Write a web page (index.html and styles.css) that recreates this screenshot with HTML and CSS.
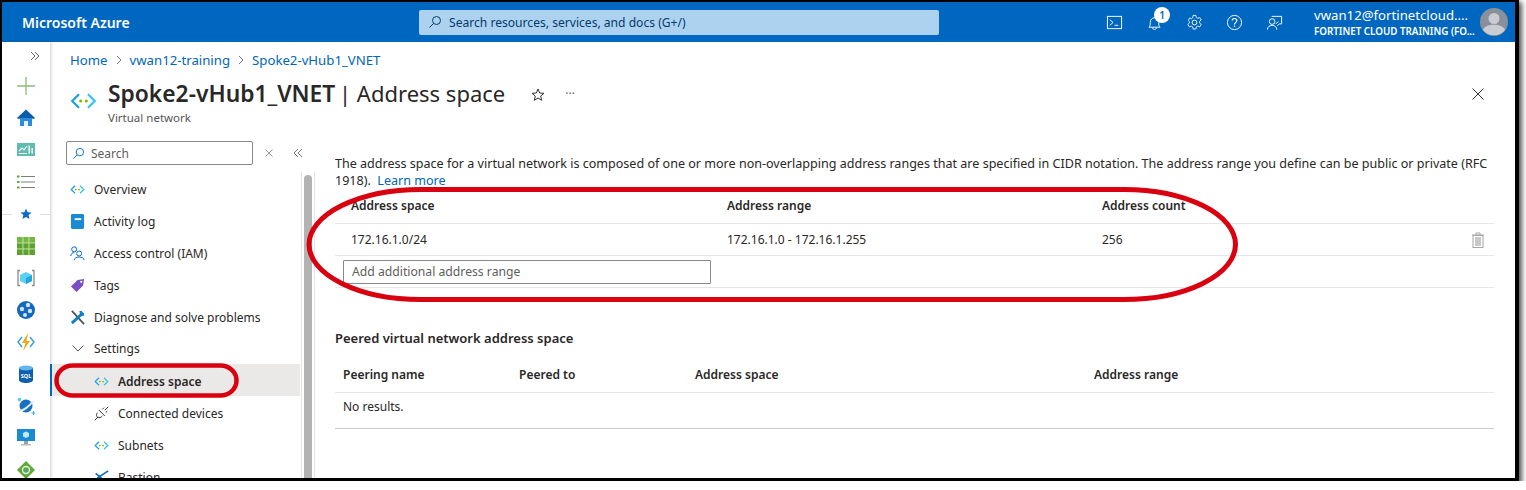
FILE: index.html
```html
<!DOCTYPE html>
<html lang="en">
<head>
  <meta charset="UTF-8">
  <title>Spoke2-vHub1_VNET | Address space</title>
  <link rel="stylesheet" href="styles.css">
</head>
<body>
  <svg class="defs" width="0" height="0">
    <symbol id="vnet" viewBox="0 0 24 16">
      <path d="M8 2 2 8l6 6" fill="none" stroke="#1da1e2" stroke-width="2"/>
      <path d="m16 2 6 6-6 6" fill="none" stroke="#35c4e8" stroke-width="2"/>
      <circle cx="9.500" cy="8" r="1.400" fill="#7fba00"/>
      <circle cx="14.500" cy="8" r="1.400" fill="#7fba00"/>
    </symbol>
  </svg>

  <div class="frame">
    <header class="topbar">
      <div class="brand">Microsoft Azure</div>
      <div class="search-global">
        <svg width="14" height="14" viewBox="0 0 14 14"><circle cx="8.500" cy="5.500" r="4" fill="none" stroke="#063a6b"/><path d="M5.500 8.500 1.500 12.500" stroke="#063a6b"/></svg>
        <span>Search resources, services, and docs (G+/)</span>
      </div>
      <div class="top-actions">
        <svg class="top-icon" viewBox="0 0 18 18"><rect x="1.500" y="2.500" width="15" height="13" fill="none" stroke="#fff"/><path d="m4 6 3.500 3L4 12M9 12h4" fill="none" stroke="#fff"/></svg>
        <div class="bell">
          <svg class="top-icon" viewBox="0 0 18 18"><path d="M3 14c1.500-1 1.500-2.500 1.500-5C4.500 6 6.500 4 9 4s4.500 2 4.500 5c0 2.500 0 4 1.500 5zM7 14.500c0 2.500 4 2.500 4 0" fill="none" stroke="#fff"/></svg>
          <span class="badge">1</span>
        </div>
        <svg class="top-icon" viewBox="0 0 18 18"><circle cx="9" cy="9" r="2.500" fill="none" stroke="#fff"/><path d="M7.500 1.500h3l.4 2.200 1.600.9 2.100-.8 1.500 2.600-1.700 1.400v1.800l1.700 1.400-1.500 2.600-2.100-.8-1.600.9-.4 2.200h-3l-.4-2.200-1.600-.9-2.100.8-1.500-2.600 1.700-1.400V8.200L2.400 6.800l1.500-2.600 2.100.8 1.100-1z" fill="none" stroke="#fff" stroke-width=".9"/></svg>
        <svg class="top-icon" viewBox="0 0 18 18"><circle cx="9" cy="9" r="7.500" fill="none" stroke="#fff"/><path d="M6.500 7C6.500 4 11.500 4 11.500 7c0 2-2.500 2-2.500 4" fill="none" stroke="#fff" stroke-width="1.200"/><circle cx="9" cy="13" r=".8" fill="#fff"/></svg>
        <svg class="top-icon" viewBox="0 0 18 18"><circle cx="6.500" cy="8" r="3" fill="none" stroke="#fff"/><path d="M1.500 16.500c0-6 10-6 10 0M6 2.500h10.500v8H14l-2 2M10.500 10.500 13 8" fill="none" stroke="#fff"/></svg>
      </div>
      <div class="account">
        <div class="account-name">vwan12@fortinetcloud....</div>
        <div class="account-org">FORTINET CLOUD TRAINING (FO...</div>
      </div>
      <svg class="avatar" viewBox="0 0 28 28">
        <circle cx="14" cy="14" r="14" fill="#8a9099"/>
        <circle cx="14" cy="10.500" r="5.500" fill="#c9ccd1"/>
        <path d="M3 22c2-7 20-7 22 0-5 7-17 7-22 0z" fill="#c9ccd1"/>
      </svg>
    </header>

    <div class="layout">
      <nav class="rail">
        <svg class="rail-expand" viewBox="0 0 10 10"><path d="m1 1 4 4-4 4M5 1l4 4-4 4" fill="none" stroke="#666"/></svg>
        <div class="rail-item"><svg viewBox="0 0 18 18"><path d="M9 0v18M0 9h18" stroke="#8dbb78" stroke-width="1.300"/></svg></div>
        <div class="rail-item"><svg viewBox="0 0 18 18"><path d="M9 .5 18 9l-.8.8H.8L0 9z" fill="#0a5cab"/><path d="M3 9h12v8H3z" fill="#2b8be0"/><path d="M7 12h4v5H7z" fill="#e8f2fb"/></svg></div>
        <div class="rail-item"><svg viewBox="0 0 18 14"><rect width="18" height="13" fill="#5fbdb0"/><path d="m2 8 3-3 2 2 3-4" fill="none" stroke="#fff" stroke-width="1.100"/><path d="M11.500 2.500h1.500v8h-1.500zM14.500 5H16v5.500h-1.500zM2 10h8v1H2z" fill="#fff"/></svg></div>
        <div class="rail-item"><svg viewBox="0 0 18 14"><path d="M4 1.500h14M4 7h14M4 12.500h14" stroke="#7d7d7d"/><path d="M0 .5h2.500v2H0zM0 6h2.500v2H0zM0 11.500h2.500v2H0z" fill="#5ea83a"/></svg></div>
        <div class="rail-star">
          <svg viewBox="0 0 28 12"><path d="m14 .5 1.600 3.700 4 .3-3 2.600.9 3.900L14 9l-3.500 2 .9-3.900-3-2.600 4-.3z" fill="#0a6cc4"/></svg>
        </div>
        <div class="rail-item"><svg viewBox="0 0 16 16"><rect width="16" height="16" fill="#5ba32b"/><path d="M0 0h16v5H0z" fill="#76b83f"/><path d="M5.300 0v16M10.600 0v16M0 5.300h16M0 10.600h16" stroke="#cfe6b8" stroke-width=".8"/></svg></div>
        <div class="rail-item"><svg viewBox="0 0 18 18"><path d="M3 1.500H1v15h2M15 1.500h2v15h-2" fill="none" stroke="#8a8a8a" stroke-width="1.300"/><path d="m9 3 6 3v6l-6 3-6-3V6z" fill="#5cd0f2"/><path d="m9 9 6-3v6l-6 3z" fill="#23a6dd"/></svg></div>
        <div class="rail-item"><svg viewBox="0 0 18 18"><circle cx="9" cy="9" r="9" fill="#1467bd"/><circle cx="5" cy="8" r="2.200" fill="#cfe6f7"/><circle cx="11" cy="4" r="2.200" fill="#cfe6f7"/><circle cx="13" cy="10" r="2.200" fill="#cfe6f7"/><circle cx="8" cy="14" r="2" fill="#cfe6f7"/></svg></div>
        <div class="rail-item"><svg viewBox="0 0 18 18"><path d="M5 4 1 9l4 5M13 4l4 5-4 5" fill="none" stroke="#3aa0dc" stroke-width="1.500"/><path d="M11 0 5 10h3.500L6 18l7-10H9.500z" fill="#f2a71b"/></svg></div>
        <div class="rail-item"><svg viewBox="0 0 14 18"><path d="M0 3v12c0 4 14 4 14 0V3z" fill="#0f5fb0"/><ellipse cx="7" cy="3" rx="7" ry="2.500" fill="#5fb6ea"/><text class="sql" x="7" y="12.500">SQL</text></svg></div>
        <div class="rail-item"><svg viewBox="0 0 18 18"><circle cx="9" cy="9" r="6.500" fill="#1b6fc0"/><path d="M2 14C6 14 13 9 16 4" fill="none" stroke="#d3eefa" stroke-width="2"/><circle cx="2.500" cy="2.500" r="1.800" fill="#5cc8ee"/><path d="M16.500 14v4M14.500 16h4" stroke="#41b8e8" stroke-width="1.100"/></svg></div>
        <div class="rail-item"><svg viewBox="0 0 18 18"><rect width="18" height="12" fill="#1a8ad4"/><path d="m9 2.500 3 1.500v3.500L9 9 6 7.500V4z" fill="#bfeaf9"/><path d="M7 12h4v3H7z" fill="#9aa0a6"/><path d="M4 15h10v1.500H4z" fill="#b6bcc2"/></svg></div>
        <div class="rail-item"><svg viewBox="0 0 18 18"><path d="m9 0 9 9-9 9-9-9z" fill="#5ea83a"/><circle cx="9" cy="9" r="3.500" fill="none" stroke="#e4f3d8" stroke-width="1.400"/><circle cx="9" cy="9" r="1.300" fill="#3aa0dc"/></svg></div>
      </nav>

      <main class="blade">
        <div class="crumbs">
          <a>Home</a>
          <svg class="crumb-sep" viewBox="0 0 6 10"><path d="m1 1 4 4-4 4" fill="none" stroke="#777"/></svg>
          <a>vwan12-training</a>
          <svg class="crumb-sep" viewBox="0 0 6 10"><path d="m1 1 4 4-4 4" fill="none" stroke="#777"/></svg>
          <a>Spoke2-vHub1_VNET</a>
        </div>

        <div class="blade-head">
          <svg class="head-icon"><use href="#vnet"/></svg>
          <div class="head-text">
            <h1><b>Spoke2-vHub1_VNET</b> | Address space</h1>
            <div class="head-sub">Virtual network</div>
          </div>
          <svg class="head-star" viewBox="0 0 14 14"><path d="m7 1 1.700 4 4.300.3-3.300 2.800 1 4.200L7 10l-3.700 2.300 1-4.200L1 5.300 5.300 5z" fill="none" stroke="#333"/></svg>
          <span class="head-more">···</span>
          <svg class="head-close" viewBox="0 0 12 12"><path d="m.5.5 11 11m0-11-11 11" stroke="#333"/></svg>
        </div>

        <div class="blade-body">
          <aside class="menu">
            <div class="menu-search-row">
              <div class="menu-search">
                <svg width="13" height="13" viewBox="0 0 14 14"><circle cx="8.500" cy="5.500" r="4" fill="none" stroke="#0a6cc4"/><path d="M5.500 8.500 1.500 12.500" stroke="#0a6cc4"/></svg>
                <span>Search</span>
              </div>
              <svg class="menu-clear" viewBox="0 0 8 8"><path d="m.5.5 7 7m0-7-7 7" stroke="#999"/></svg>
              <svg class="menu-collapse" viewBox="0 0 10 10"><path d="M5 1 1 5l4 4M9 1 5 5l4 4" fill="none" stroke="#777"/></svg>
            </div>
            <ul class="menu-list">
              <li class="menu-item"><svg class="mi"><use href="#vnet"/></svg>Overview</li>
              <li class="menu-item"><svg class="mi" viewBox="0 0 14 16"><rect width="14" height="16" rx="1.500" fill="#1a8ad4"/><rect x="4" y="4.500" width="7" height="2" fill="#fff"/></svg>Activity log</li>
              <li class="menu-item"><svg class="mi" viewBox="0 0 18 18"><circle cx="5" cy="4" r="3" fill="none" stroke="#0a6cc4" stroke-width="1.200"/><circle cx="11" cy="9" r="3" fill="none" stroke="#0a6cc4" stroke-width="1.200"/><path d="M1 12c0-3 2-4 4-4M5 17c0-5 12-5 12 0" fill="none" stroke="#0a6cc4" stroke-width="1.200"/></svg>Access control (IAM)</li>
              <li class="menu-item"><svg class="mi" viewBox="0 0 16 16"><path d="M1 9 8 2l7-1-1 7-7 7z" fill="#7a4fc4"/><circle cx="12" cy="4" r="1.200" fill="#fff"/></svg>Tags</li>
              <li class="menu-item"><svg class="mi" viewBox="0 0 16 16"><path d="M2 1 15 15" stroke="#555" stroke-width="2"/><path d="M14 3 2 14" stroke="#0f7fbf" stroke-width="3"/><path d="M10 1h3l-1 3 3-1v3h-4z" fill="#0f7fbf"/></svg>Diagnose and solve problems</li>
              <li class="menu-item menu-group"><svg class="mi-chevron" viewBox="0 0 12 7"><path d="m.5.5 5.500 5.500L11.500.5" fill="none" stroke="#555"/></svg>Settings</li>
              <li class="menu-item menu-sub menu-active"><svg class="mi"><use href="#vnet"/></svg>Address space</li>
              <li class="menu-item menu-sub"><svg class="mi" viewBox="0 0 18 18"><path d="M1 17l4-4M13 5l4-4M6 5l7 7M4 8c-2 3-1 6 2 6 2 0 3-1 4-2M10 4l2-2M14 8l2-2" fill="none" stroke="#333" stroke-width="1.200"/></svg>Connected devices</li>
              <li class="menu-item menu-sub"><svg class="mi"><use href="#vnet"/></svg>Subnets</li>
              <li class="menu-item menu-sub"><svg class="mi" viewBox="0 0 18 18"><path d="M17 1 5 9l12 8M2 4l6 5-6 5" fill="none" stroke="#0f6cc0" stroke-width="2"/></svg>Bastion</li>
            </ul>
          </aside>
          <div class="scrollbar"><div class="scroll-thumb"></div></div>

          <section class="content">
            <p class="intro">The address space for a virtual network is composed of one or more non-overlapping address ranges that are specified in CIDR notation. The address range you define can be public or private (RFC 1918). &nbsp;<a>Learn more</a></p>

            <div class="row addr-row head"><span>Address space</span><span>Address range</span><span>Address count</span></div>
            <div class="row addr-row">
              <span>172.16.1.0/24</span><span>172.16.1.0 - 172.16.1.255</span><span>256</span>
              <svg class="trash" viewBox="0 0 14 16"><path d="M1 3h12M5 3V1h4v2" fill="none" stroke="#a6a6a6"/><rect x="2" y="3.500" width="10" height="12" fill="#fff" stroke="#a6a6a6"/><rect x="4" y="5" width="6" height="9" fill="#c8c8c8"/></svg>
            </div>
            <div class="row input-row"><input class="addr-input" placeholder="Add additional address range"></div>

            <h2>Peered virtual network address space</h2>
            <div class="row peer-row head"><span>Peering name</span><span>Peered to</span><span>Address space</span><span>Address range</span></div>
            <div class="row peer-row empty"><span>No results.</span></div>
          </section>
        </div>
      </main>
    </div>

    <svg class="marks" width="1519" height="481">
      <rect x="309" y="189.500" width="926.500" height="110" rx="112" ry="55"/>
      <rect class="mark-small" x="56.500" y="365.500" width="180" height="30" rx="16" ry="15"/>
    </svg>
  </div>
</body>
</html>
```

FILE: styles.css
```css
* {
  box-sizing: border-box;
}

body {
  margin: 0;
  background-color: #fff;
  font-family: "Noto Sans", "Open Sans", sans-serif;
  font-size: 12px;
  color: #292827;
}

.defs {
  display: block;
  height: 0;
}

.frame {
  position: relative;
  width: 1519px;
  height: 481px;
  border: solid #000;
  border-width: 2px 4px 3px 2px;
  background-color: #fff;
  box-shadow: 2px 3px 5px 1px #555;
  overflow: hidden;
  display: flex;
  flex-direction: column;
}

.topbar {
  flex: none;
  height: 40px;
  background-color: #0067c0;
  color: #fff;
  display: flex;
  align-items: center;
}

.brand {
  width: 417px;
  padding-left: 20px;
  font-size: 14px;
  font-weight: 600;
}

.search-global {
  width: 520px;
  height: 25px;
  background-color: #add2f0;
  border-radius: 2px;
  display: flex;
  align-items: center;
  gap: 7px;
  padding-left: 9px;
  color: #063a6b;
  font-size: 12.100px;
}

.top-actions {
  margin-left: 167px;
  width: 190px;
  display: flex;
  align-items: center;
  gap: 23px;
}

.top-icon {
  display: block;
  width: 17px;
  height: 17px;
}

.bell {
  position: relative;
}

.badge {
  position: absolute;
  top: -7px;
  left: 8px;
  width: 16px;
  height: 16px;
  border-radius: 50%;
  background-color: #fff;
  color: #0067c0;
  font-size: 10px;
  font-weight: 600;
  line-height: 16px;
  text-align: center;
}

.account {
  margin-left: 18px;
  padding-top: 2px;
  width: 167px;
  white-space: nowrap;
}

.account-name {
  font-size: 13.200px;
  line-height: 16px;
}

.account-org {
  margin-top: 2px;
  font-size: 9.800px;
  font-weight: 600;
  line-height: 14px;
}

.avatar {
  width: 28px;
  height: 28px;
  margin-left: -1px;
}

.layout {
  flex: 1;
  min-height: 0;
  display: flex;
}

.rail {
  flex: none;
  width: 48px;
  box-shadow: 1px 0 3px rgba(0, 0, 0, 0.2);
  display: flex;
  flex-direction: column;
  align-items: center;
  padding-top: 9px;
}

.rail-expand {
  flex: none;
  width: 10px;
  height: 10px;
  margin-left: 18px;
  margin-bottom: 9px;
}

.rail-item {
  flex: none;
  height: 32px;
  display: flex;
  align-items: center;
  justify-content: center;
}

.rail-item svg {
  width: 18px;
  height: 18px;
}

.rail-star {
  flex: none;
  width: 48px;
  height: 32px;
  display: flex;
  align-items: center;
  justify-content: center;
  background: linear-gradient(#ddd, #ddd) center / 100% 1px no-repeat;
}

.rail-star svg {
  width: 28px;
  height: 12px;
  background-color: #fff;
}

.sql {
  font-size: 5.500px;
  font-weight: 700;
  fill: #fff;
  text-anchor: middle;
}

.blade {
  flex: 1;
  min-width: 0;
  display: flex;
  flex-direction: column;
}

.crumbs {
  flex: none;
  height: 32px;
  padding: 4px 0 0 20px;
  display: flex;
  align-items: center;
  gap: 8px;
  font-size: 13.200px;
  color: #0067b8;
}

.crumb-sep {
  width: 6px;
  height: 10px;
}

.blade-head {
  flex: none;
  height: 62px;
  padding: 3px 0 0 20px;
  display: flex;
  align-items: flex-start;
}

.head-icon {
  width: 27px;
  height: 18px;
  margin-top: 15px;
}

.head-text {
  margin-left: 11px;
}

h1 {
  margin: 0;
  font-size: 22px;
  font-weight: 400;
  line-height: 32px;
  white-space: nowrap;
}

h1 b {
  font-size: 22.800px;
  font-weight: 600;
  margin-right: -2px;
}

.head-sub {
  font-size: 11.500px;
  line-height: 16px;
  color: #555;
}

.head-star {
  width: 14px;
  height: 14px;
  margin: 11px 0 0 26px;
}

.head-more {
  margin: 8px 0 0 20px;
  font-size: 12px;
  color: #666;
}

.head-close {
  width: 12px;
  height: 12px;
  margin: 11px 31px 0 auto;
}

.blade-body {
  flex: 1;
  min-height: 0;
  display: flex;
}

.menu {
  flex: none;
  width: 250px;
}

.menu-search-row {
  height: 24px;
  margin-top: 5px;
  display: flex;
  align-items: center;
  padding-left: 16px;
}

.menu-search {
  flex: none;
  width: 187px;
  height: 24px;
  border: 1px solid #8a8886;
  border-radius: 2px;
  display: flex;
  align-items: center;
  gap: 6px;
  padding-left: 5px;
  color: #605e5c;
}

.menu-clear {
  flex: none;
  width: 8px;
  height: 8px;
  margin-left: 12px;
}

.menu-collapse {
  flex: none;
  width: 10px;
  height: 10px;
  margin-left: 20px;
}

.menu-list {
  list-style: none;
  margin: 8px 0 0;
  padding: 0;
}

.menu-item {
  height: 32px;
  display: flex;
  align-items: center;
  gap: 9px;
  padding-left: 20px;
  white-space: nowrap;
}

.mi {
  flex: none;
  width: 15px;
  height: 15px;
}

.mi-chevron {
  flex: none;
  width: 12px;
  height: 7px;
  margin: 0 1px 0 2px;
}

.menu-group {
  height: 31px;
}

.menu-sub {
  padding-left: 44px;
  padding-top: 2px;
}

.menu-active {
  background-color: #ebe9e7;
  border-left: 2px solid #0067b8;
  padding-left: 42px;
  font-weight: 600;
}

.scrollbar {
  flex: none;
  width: 14px;
  margin: 36px 0 0 1px;
  padding: 3px 2px 0;
  border-left: 1px solid #e4e4e4;
  border-right: 1px solid #e4e4e4;
}

.scroll-thumb {
  height: 100%;
  background-color: #b3b3b3;
  border-radius: 4px 4px 0 0;
}

.content {
  flex: 1;
  min-width: 0;
  padding: 19px 21px 0 20px;
}

.intro {
  margin: 0;
  font-size: 12.550px;
  line-height: 17px;
}

a {
  color: #0067b8;
}

.row {
  border-bottom: 1px solid #e6e6e6;
  display: grid;
  align-items: center;
  height: 32px;
}

.addr-row {
  position: relative;
  grid-template-columns: 376px 375px 1fr;
  padding-left: 16px;
}

.addr-row.head {
  height: 35px;
  padding-bottom: 2px;
}

.head {
  font-weight: 600;
}

.trash {
  position: absolute;
  right: 9px;
  top: 8px;
  width: 14px;
  height: 16px;
}

.input-row {
  padding-left: 8px;
  grid-template-columns: 368px;
}

.addr-input {
  width: 368px;
  height: 24px;
  padding: 0 8px;
  border: 1px solid #8a8886;
  border-radius: 1px;
  font: inherit;
  font-size: 12.200px;
}

.addr-input::placeholder {
  color: #605e5c;
  opacity: 1;
}

h2 {
  margin: 40px 0 0;
  font-size: 13px;
  font-weight: 600;
  line-height: 20px;
}

.peer-row {
  grid-template-columns: 176px 176px 399px 1fr;
  padding-left: 8px;
  height: 36px;
}

.peer-row.head {
  margin-top: 9px;
}

.empty {
  padding-bottom: 8px;
  border-bottom-color: #ccc;
}

.marks {
  position: absolute;
  left: -2px;
  top: -2px;
  pointer-events: none;
}

.marks rect {
  fill: none;
  stroke: #d9000f;
  stroke-width: 5px;
}

.marks .mark-small {
  stroke-width: 4.500px;
}
```
